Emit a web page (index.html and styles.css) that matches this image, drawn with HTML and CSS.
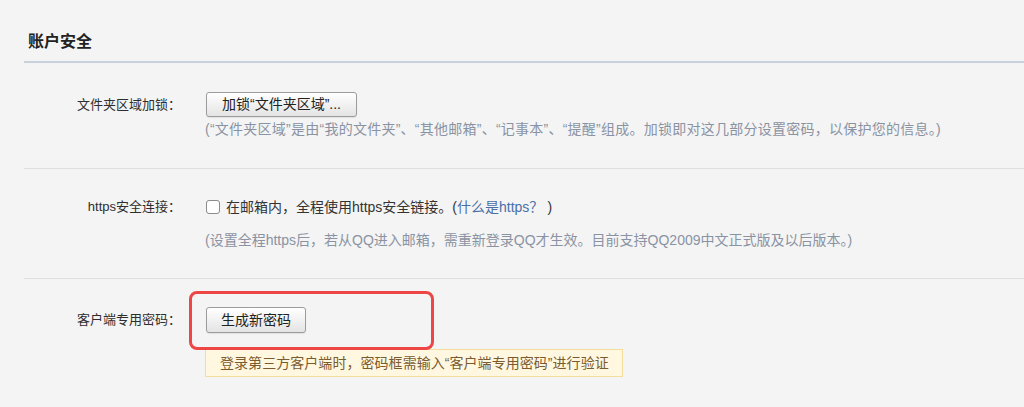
FILE: index.html
```html
<!DOCTYPE html>
<html lang="zh-CN">
<head>
<meta charset="utf-8">
<title>账户安全</title>
<link rel="stylesheet" href="styles.css">
</head>
<body>
<div class="page">
  <div class="title">账户安全</div>

  <div class="row row-lock">
    <div class="label">文件夹区域加锁：</div>
    <div class="field">
      <button class="btn btn-lock">加锁“文件夹区域”...</button>
      <div class="hint hint-lock">(“文件夹区域”是由“我的文件夹”、“其他邮箱”、“记事本”、“提醒”组成。加锁即对这几部分设置密码，以保护您的信息。)</div>
    </div>
  </div>

  <div class="row row-https">
    <div class="label label-https">https安全连接：</div>
    <div class="field">
      <div class="check-line"><span class="checkbox"></span>在邮箱内，全程使用https安全链接。(<a class="link">什么是https？</a>)</div>
      <div class="hint hint-https">(设置全程https后，若从QQ进入邮箱，需重新登录QQ才生效。目前支持QQ2009中文正式版及以后版本。)</div>
    </div>
  </div>

  <div class="row row-client">
    <div class="label label-client">客户端专用密码：</div>
    <div class="field">
      <button class="btn btn-gen">生成新密码</button>
      <div class="tip">登录第三方客户端时，密码框需输入“客户端专用密码”进行验证</div>
    </div>
    <div class="highlight"></div>
  </div>
</div>
</body>
</html>
```

FILE: styles.css
```css
* { box-sizing: border-box; }

body {
  margin: 0;
  background: #f4f4f4;
  font-family: "Liberation Sans", "Noto Sans CJK SC", sans-serif;
  color: #333;
}

.page {
  padding-left: 24px;
  height: 407px;
  overflow: hidden;
}

.title {
  padding: 31px 0 8px 4px;
  font-size: 16px;
  font-weight: bold;
  line-height: 22px;
  color: #222;
  border-bottom: 2px solid #c9d1dd;
}

.row {
  position: relative;
  display: grid;
  grid-template-columns: 157px 1fr;
  column-gap: 25px;
  border-bottom: 1px solid #dfdfdf;
}

.label {
  text-align: right;
  font-size: 13px;
  line-height: 25px;
  color: #2e2e2e;
}

.field {
  display: flex;
  flex-direction: column;
  align-items: flex-start;
}

.btn {
  font-family: "Liberation Sans", "Noto Sans CJK SC", sans-serif;
  font-size: 14px;
  color: #222;
  padding: 0 14px;
  border: 1px solid #9c9c9c;
  border-radius: 3px;
  background: linear-gradient(#ffffff, #e4e4e4);
  box-shadow: 0 1px 1px rgba(0,0,0,0.08);
}

.hint {
  font-size: 14px;
  line-height: 20px;
  color: #8a93a3;
  margin-left: -1px;
}

/* row 1 */
.row-lock { padding: 29px 0 29px; }
.btn-lock { height: 25px; line-height: 23px; padding: 0 15px; }
.hint-lock { margin-top: 2px; letter-spacing: 0.25px; }

/* row 2 */
.row-https { padding: 28px 0 28px; }
.label-https { line-height: 20px; }
.check-line {
  display: flex;
  align-items: center;
  font-size: 14px;
  line-height: 20px;
  color: #333;
}
.checkbox {
  width: 14px;
  height: 14px;
  border: 1px solid #8b8b8b;
  border-radius: 3px;
  background: #fff;
  margin-right: 6px;
  flex: none;
}
.link { color: #4a6ea6; margin-right: 4px; }
.hint-https { margin-top: 13px; }

/* row 3 */
.row-client { padding: 28px 0 30px; border-bottom: none; }
.label-client { line-height: 26px; }
.btn-gen { height: 26px; line-height: 24px; }

.tip {
  margin-top: 16px;
  margin-left: -1px;
  height: 28px;
  padding: 0 13px 0 14px;
  font-size: 14px;
  line-height: 26px;
  color: #7b5b2e;
  background: #fff7e0;
  border: 1px solid #f5dd9c;
  letter-spacing: 0.05px;
}

.highlight {
  position: absolute;
  left: 165px;
  top: 12px;
  width: 245px;
  height: 59px;
  border: 3px solid #ee4545;
  border-radius: 8px;
  pointer-events: none;
}
```
